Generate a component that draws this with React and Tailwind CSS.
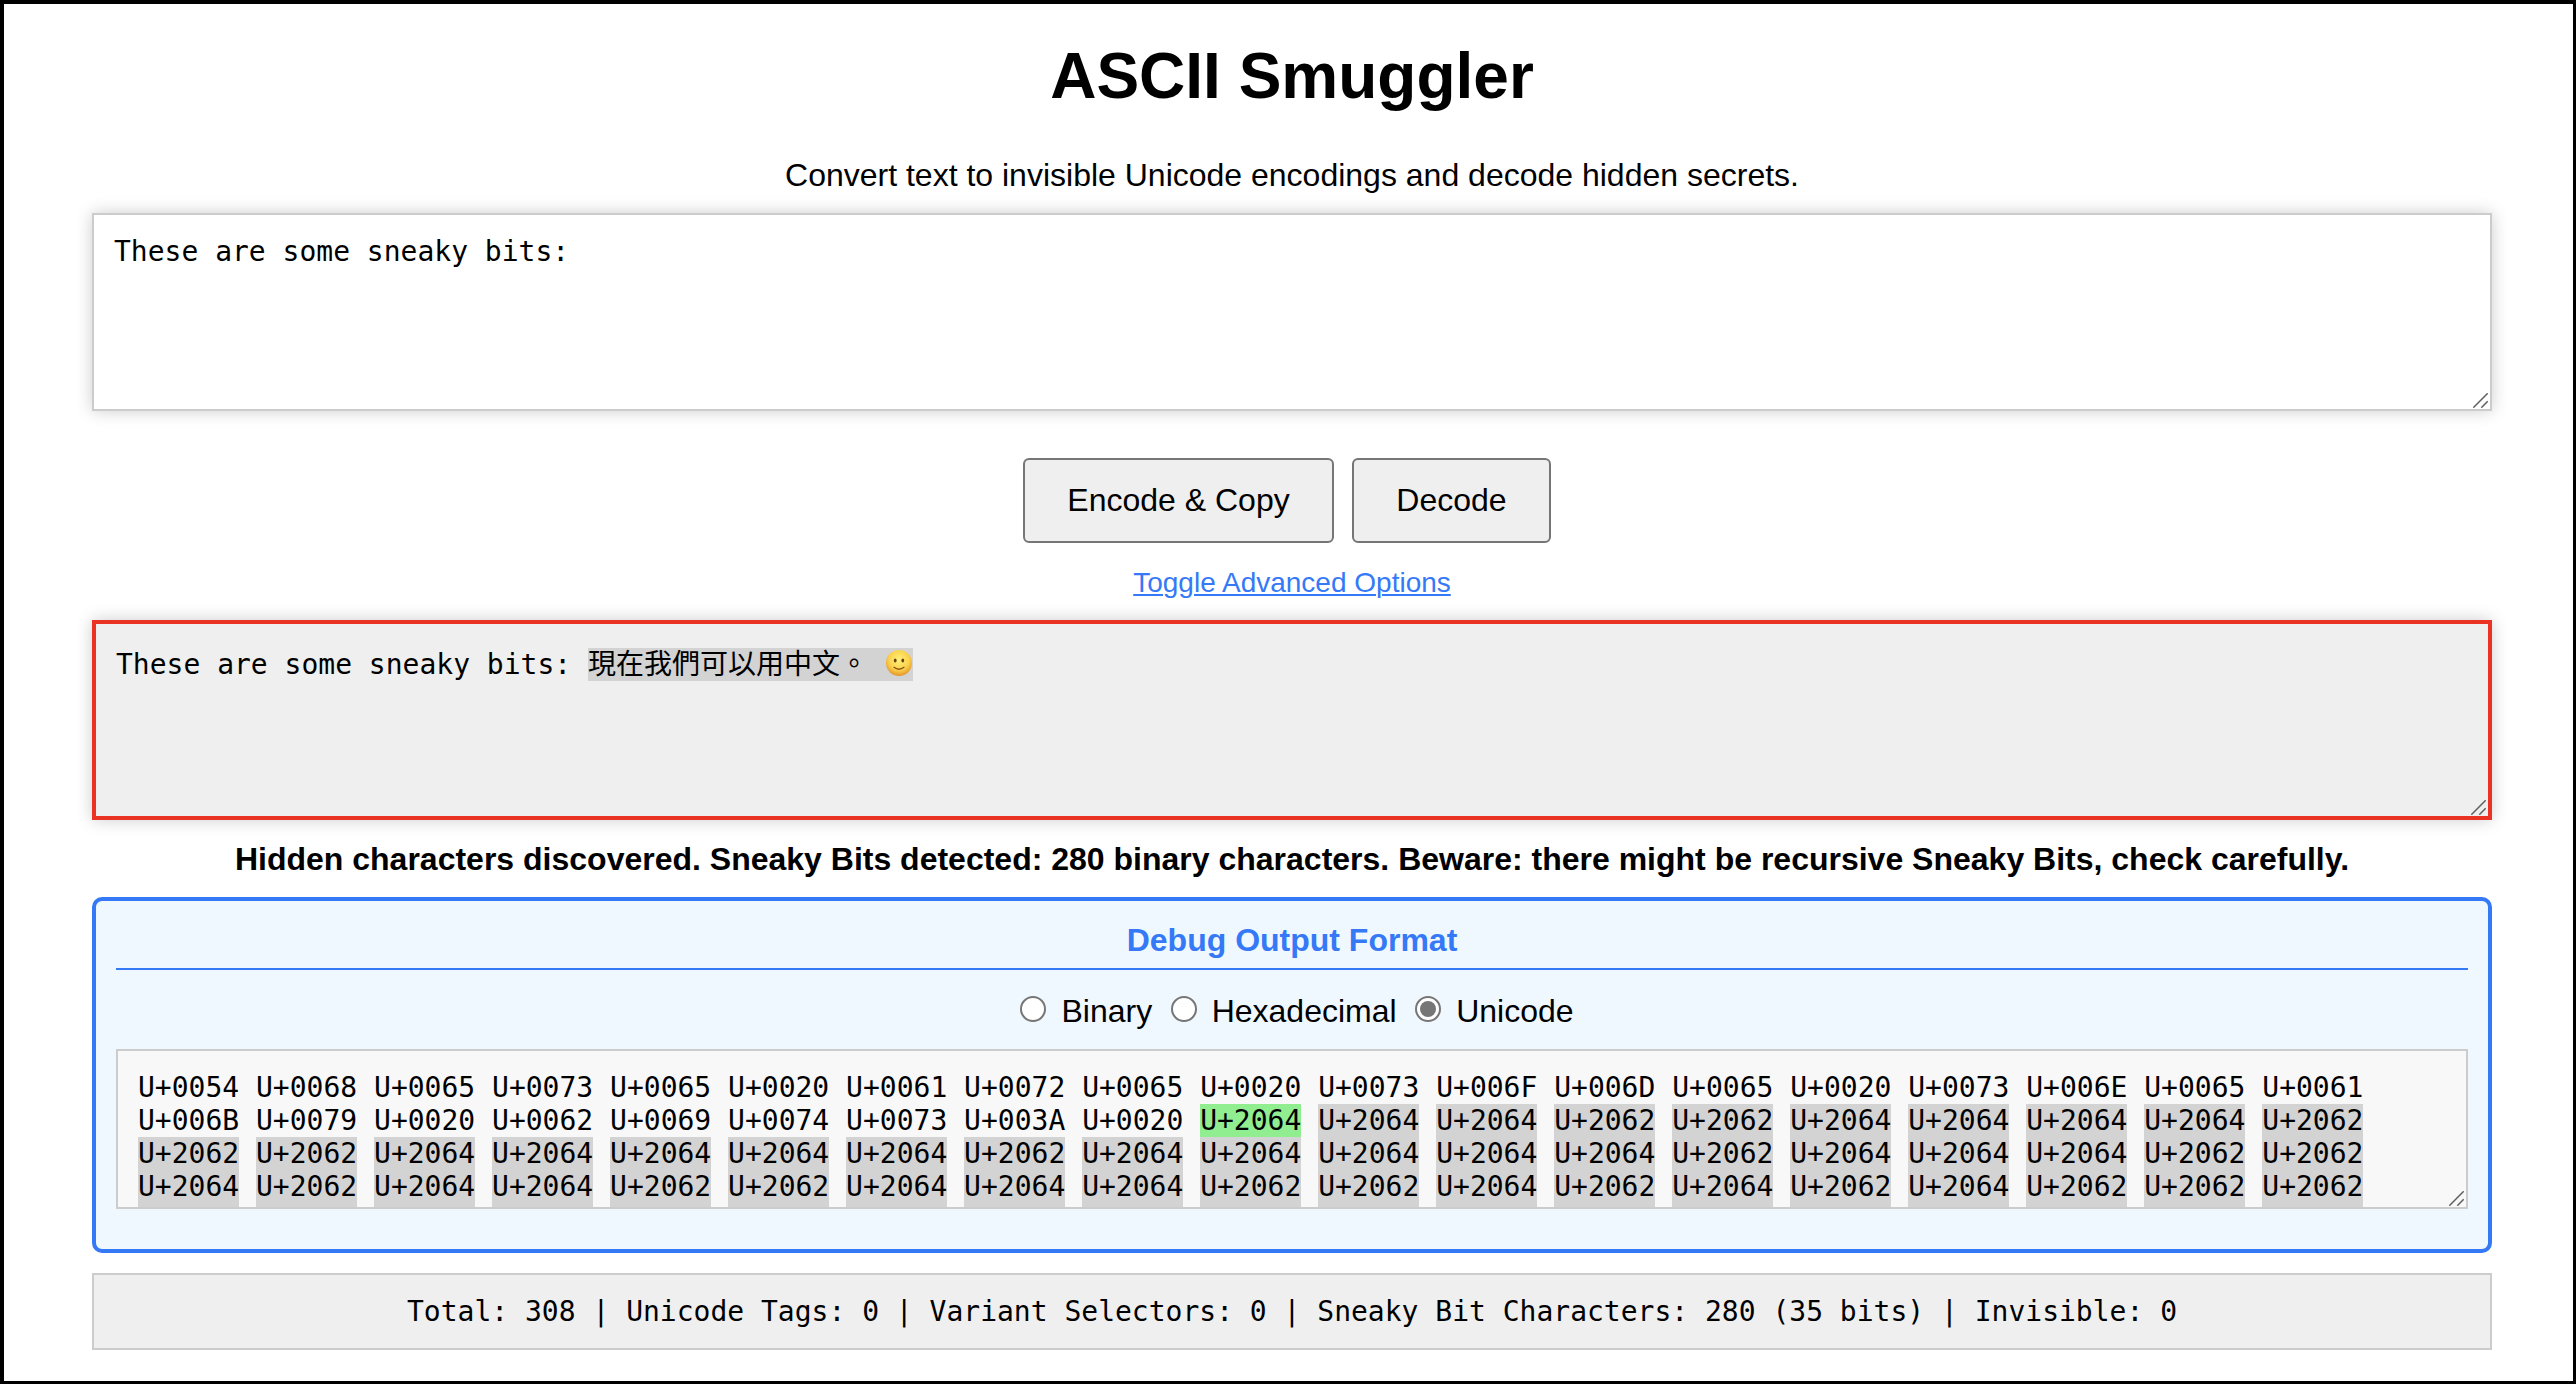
import React from "react";

const VISIBLE = "These are some sneaky bits: ";
const HIDDEN = "現在我們可以用中文。 🙂";

const plainCodes = [...VISIBLE].map(
  (c) => "U+" + c.codePointAt(0).toString(16).toUpperCase().padStart(4, "0")
);

// Each hidden byte becomes eight invisible operators: U+2062 for 0, U+2064 for 1.
const sneakyCodes = [...new TextEncoder().encode(HIDDEN)]
  .flatMap((byte) => [...byte.toString(2).padStart(8, "0")])
  .map((bit) => (bit === "1" ? "U+2064" : "U+2062"));

function ResizeGrip() {
  return (
    <svg className="absolute right-[2px] bottom-[1px] h-[15px] w-[15px]" viewBox="0 0 15 15" fill="none" stroke="#5f5f5f" strokeWidth="1.5">
      <path d="M0.3 14.7 14.7 0.3M8.3 14.7 14.7 8.3" />
    </svg>
  );
}

function Smiley() {
  return (
    <svg className="inline-block h-[28px] w-[28px] align-[-3px]" viewBox="0 0 28 28" role="img" aria-label="🙂">
      <defs>
        <radialGradient id="face" cx="0.5" cy="0.38" r="0.64">
          <stop offset="0" stopColor="#fff07a" />
          <stop offset="0.6" stopColor="#fbd24c" />
          <stop offset="1" stopColor="#e3902b" />
        </radialGradient>
      </defs>
      <circle cx="14" cy="14" r="13" fill="url(#face)" />
      <ellipse cx="10.2" cy="11.5" rx="1.4" ry="2.1" fill="#6b4012" />
      <ellipse cx="17.8" cy="11.5" rx="1.4" ry="2.1" fill="#6b4012" />
      <path d="M9 18.3Q14 22.2 19 18.3" fill="none" stroke="#8a5314" strokeWidth="1.3" strokeLinecap="round" />
    </svg>
  );
}

function Radio({ label, checked }) {
  return (
    <label className="flex items-start">
      <span className="mt-[3px] mr-[15px] ml-[10px] flex h-[26px] w-[26px] items-center justify-center rounded-full border-2 border-[#767676] bg-white">
        {checked && <span className="h-4 w-4 rounded-full bg-[#767676]" />}
      </span>
      {label}
    </label>
  );
}

export default function App() {
  return (
    <div className="flex h-[1384px] w-[2576px] flex-col items-center overflow-hidden border-t-4 border-r-[3px] border-b-[3px] border-l-4 border-black bg-white pr-[81px] pl-[88px] font-['Liberation_Sans',Arial,sans-serif] text-[32px] leading-[36px] text-black">
      <h1 className="mt-9 text-[64px] leading-[72px] font-bold">ASCII Smuggler</h1>
      <p className="mt-[45px]">Convert text to invisible Unicode encodings and decode hidden secrets.</p>

      <div className="relative mt-5 h-[198px] w-full shrink-0 border-2 border-[#ccc] bg-white p-5 font-['DejaVu_Sans_Mono',monospace] text-[28px] leading-[33px] whitespace-pre shadow-[0_0_16px_rgba(0,0,0,0.2)]">
        {VISIBLE}
        <ResizeGrip />
      </div>

      <div className="mt-[47px] flex gap-[18px] pr-[10px]">
        <button className="h-[85px] w-[311px] rounded-[6px] border-2 border-[#767676] bg-[#efefef] pb-px">Encode &amp; Copy</button>
        <button className="h-[85px] w-[199px] rounded-[6px] border-2 border-[#767676] bg-[#efefef] pb-px">Decode</button>
      </div>
      <a className="mt-6 text-[28px] leading-[32px] text-[#3579f7] underline decoration-2 underline-offset-2">Toggle Advanced Options</a>

      <div className="relative mt-[21px] h-[200px] w-full shrink-0 border-4 border-[#eb3323] bg-[#efefef] px-5 pt-6 font-['DejaVu_Sans_Mono','Noto_Sans_CJK_TC',monospace] text-[28px] leading-[33px] whitespace-pre shadow-[0_0_16px_rgba(0,0,0,0.2)]">
        <div className="flex">
          <span>{VISIBLE}</span>
          <span className="h-[33px] bg-[#d3d3d3]">
            現在我們可以用中文。 <Smiley />
          </span>
        </div>
        <ResizeGrip />
      </div>

      <p className="mt-[21px] font-bold whitespace-nowrap">
        Hidden characters discovered. Sneaky Bits detected: 280 binary characters. Beware: there might be recursive Sneaky Bits, check carefully.
      </p>

      <section className="mt-5 h-[356px] w-full shrink-0 rounded-[10px] border-4 border-[#3579f7] bg-[#f0f8ff] px-5 pt-[21px]">
        <h2 className="h-12 border-b-2 border-[#3579f7] text-center font-bold text-[#3579f7]">Debug Output Format</h2>
        <div className="mt-[23px] flex h-9 justify-center gap-[8.5px]">
          <Radio label="Binary" />
          <Radio label="Hexadecimal" />
          <Radio label="Unicode" checked />
        </div>
        <div className="relative mt-5 h-[160px] overflow-hidden border-2 border-[#ccc] bg-[#f8f8f8] p-5 font-['DejaVu_Sans_Mono',monospace] text-[28px] leading-[33px]">
          {plainCodes.map((code, i) => (
            <React.Fragment key={i}>{code} </React.Fragment>
          ))}
          {sneakyCodes.map((code, i) => (
            <React.Fragment key={i}>
              <span className={i === 0 ? "bg-[#90ee90]" : "bg-[#d3d3d3]"}>{code}</span>{" "}
            </React.Fragment>
          ))}
          <ResizeGrip />
        </div>
      </section>

      <div className="mt-5 h-[77px] w-full shrink-0 border-2 border-[#ccc] bg-[#efefef] p-5 text-center font-['DejaVu_Sans_Mono',monospace] text-[28px] leading-[33px]">
        Total: 308 | Unicode Tags: 0 | Variant Selectors: 0 | Sneaky Bit Characters: 280 (35 bits) | Invisible: 0
      </div>
    </div>
  );
}
